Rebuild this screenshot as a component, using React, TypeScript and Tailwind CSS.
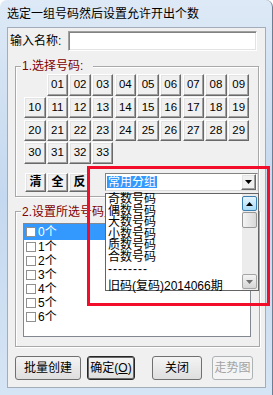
import React from 'react';

const cells = ['', ...Array.from({ length: 33 }, (_, i) => String(i + 1).padStart(2, '0'))];
const groups = ['奇数号码', '偶数号码', '大数号码', '小数号码', '质数号码', '合数号码'];
const counts = ['0个', '1个', '2个', '3个', '4个', '5个', '6个'];

const bevel =
  'bg-[#f0f0f0] border border-t-white border-l-white border-r-[#696969] border-b-[#696969] shadow-[inset_-1px_-1px_0_#a0a0a0,inset_1px_1px_0_#e3e3e3]';

function Tri({ color = '#000' }: { color?: string }) {
  return (
    <svg width="7" height="4" viewBox="0 0 7 4">
      <path d="M0 0H7L3.5 4Z" fill={color} />
    </svg>
  );
}

function WinButton({ children, className, primary, disabled }: { children: React.ReactNode; className: string; primary?: boolean; disabled?: boolean }) {
  let look = 'border-[#707070] bg-linear-to-b from-[#f4f4f4] to-[#dedede] text-black';
  if (primary) look = 'border-[#262626] bg-linear-to-b from-[#f4f4f4] to-[#dedede] text-black shadow-[inset_0_0_0_1px_#6a6a6a]';
  if (disabled) look = 'border-[#adb2b5] bg-[#f4f4f4] text-[#a3a3a3]';
  return (
    <div className={`flex h-[24px] items-center justify-center whitespace-nowrap rounded-[3px] border ${look} ${className}`}>
      {children}
    </div>
  );
}

export default function App() {
  return (
    <div className="relative h-[395px] w-[273px] overflow-hidden rounded-t-[7px] border-r border-[#6e7e92] bg-linear-to-b from-[#dde9f6] via-[#c4d8ef] to-[#d6e5f5] font-['Liberation_Sans','Noto_Sans_CJK_SC',sans-serif] text-[12px] text-black">
      <div className="h-[27px] whitespace-nowrap pl-[7px] pt-[8px] leading-[12px]">选定一组号码然后设置允许开出个数</div>

      <div className="ml-[7px] h-[361px] w-[259px] border border-[#a3adba] bg-[#f0f0f0]">
        {/* name input */}
        <div className="mt-[3px] flex h-[20px] items-center">
          <div className="w-[60px] whitespace-nowrap pl-[2px] leading-[20px]">输入名称:</div>
          <div className="h-[20px] w-[189px] border border-t-[#a0a0a0] border-l-[#a0a0a0] border-r-white border-b-white bg-white shadow-[inset_1px_1px_0_#828282,inset_-1px_-1px_0_#e3e3e3]" />
        </div>

        {/* group 1 */}
        <fieldset className="m-0 ml-[7px] mt-[7px] w-[244px] border border-[#a8a8a8] p-0 pb-[4px] shadow-[inset_1px_1px_0_#fff,1px_1px_0_#fff]">
          <legend className="ml-[5px] whitespace-nowrap bg-[#f0f0f0] pl-[1px] pr-[10px] leading-[16px] text-[#800000]">1.选择号码:</legend>
          <div className="ml-[8px] grid grid-cols-[repeat(10,21.5px)] grid-rows-[repeat(4,21.5px)] gap-x-[1.17px] gap-y-[1.3px]">
            {cells.map((n, i) =>
              n ? (
                <div key={i} className={`${bevel} flex items-center justify-center text-[11.5px] leading-none`}>
                  {n}
                </div>
              ) : (
                <div key={i} />
              )
            )}
          </div>
          <div className="ml-[9px] mt-[9px] flex items-center">
            {['清', '全', '反'].map(t => (
              <div key={t} className={`${bevel} mr-[1px] flex h-[19px] w-[21px] items-center justify-center font-bold`}>
                {t}
              </div>
            ))}
            <div className="ml-[14px] flex h-[18px] w-[153px] items-center border border-t-[#828282] border-l-[#828282] border-r-[#dcdcdc] border-b-[#dcdcdc] bg-white pl-[1px] pr-[1px]">
              <span className="bg-[#3399ff] px-[1px] leading-[12px] text-white">常用分组</span>
              <div className={`${bevel} ml-auto flex h-[16px] w-[15px] items-center justify-center`}>
                <Tri />
              </div>
            </div>
          </div>
        </fieldset>

        {/* group 2 */}
        <fieldset className="m-0 ml-[7px] mt-[7px] w-[245px] border border-[#a8a8a8] p-0 pb-[9px] shadow-[inset_1px_1px_0_#fff,1px_1px_0_#fff]">
          <legend className="ml-[5px] w-[84px] overflow-hidden whitespace-nowrap bg-[#f0f0f0] pl-[1px] leading-[16px] text-[#800000]">2.设置所选号码允许开出个数:</legend>
          <div className="ml-[7px] mt-[3px] h-[114px] w-[228px] border border-[#828790] bg-white">
            {counts.map((c, i) => (
              <div key={c} className={`flex items-center ${i === 0 ? 'h-[16px] bg-[#3399ff] text-white' : 'h-[14px]'}`}>
                <div className="ml-[2px] h-[10px] w-[10px] border border-[#8f8f8f] bg-white" />
                <span className="ml-[2px] leading-[12px]">{c}</span>
              </div>
            ))}
          </div>
        </fieldset>

        {/* buttons */}
        <div className="ml-[7px] mt-[9px] flex">
          <WinButton className="w-[66px]">批量创建</WinButton>
          <WinButton className="ml-[6px] w-[48px]" primary>
            确定(<span className="underline">O</span>)
          </WinButton>
          <WinButton className="ml-[17px] w-[50px]">关闭</WinButton>
          <WinButton className="ml-[10px] w-[41px]" disabled>
            走势图
          </WinButton>
        </div>
      </div>

      {/* open dropdown list */}
      <div className="absolute left-[105px] top-[193px] flex h-[98px] w-[154px] border border-[#646464] bg-white">
        <div className="flex-1 whitespace-nowrap pl-[2px] leading-[11.6px]">
          {groups.map(g => (
            <div key={g}>{g}</div>
          ))}
          <div className="tracking-[1px]">--------</div>
          <div className="mt-[6px]">旧码(复码)2014066期</div>
        </div>
        <div className="flex w-[16px] flex-col bg-[#ececec] pb-[1px] pr-[1px] pt-[2px]">
          <div className="flex h-[15px] w-[15px] items-center justify-center rounded-[2px] border border-[#3c7fb1] bg-linear-to-b from-[#e6f5fd] to-[#a9dbf6]">
            <svg width="7" height="4" viewBox="0 0 7 4">
              <path d="M0 4H7L3.5 0Z" fill="#000" />
            </svg>
          </div>
          <div className="mt-[1px] h-[16px] w-[15px] rounded-[2px] border border-[#989898] bg-linear-to-r from-[#f4f4f4] to-[#d9d9d9]" />
          <div className="mt-auto flex h-[15px] w-[15px] items-center justify-center rounded-[2px] border border-[#a5a5a5] bg-linear-to-b from-[#f4f4f4] to-[#d6d6d6]">
            <Tri color="#707070" />
          </div>
        </div>
      </div>

      {/* red annotation box */}
      <div className="absolute left-[87px] top-[166px] h-[140px] w-[183px] border-[3px] border-[#f20e2a]" />
    </div>
  );
}
